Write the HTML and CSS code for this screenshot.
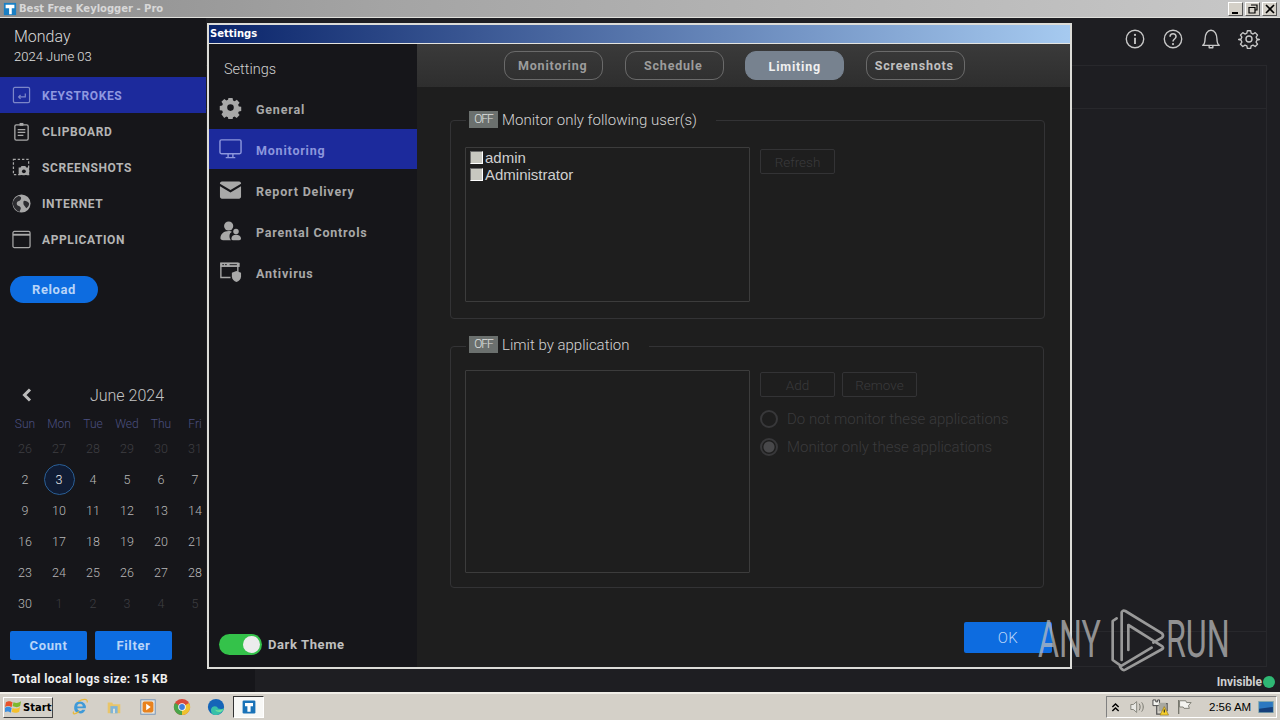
FILE: index.html
```html
<!DOCTYPE html>
<html lang="en">
<head>
<meta charset="utf-8">
<title>Best Free Keylogger - Pro</title>
<link rel="stylesheet" href="styles.css">
</head>
<body>
<div class="screen">
  <header class="appbar">
    <svg class="appicon" viewBox="0 0 16 16"><rect x="1" y="1" width="14" height="14" fill="#1a7fc4"/><path d="M3 3h10v4h-3v7H7V7H3z" fill="#fff"/></svg>
    <span class="apptitle">Best Free Keylogger - Pro</span>
    <div class="wincontrols">
      <button class="winbtn"><svg viewBox="0 0 12 10"><path d="M2 8h6v2H2z" fill="#000"/></svg></button>
      <button class="winbtn"><svg viewBox="0 0 12 10"><path d="M4 1h6v5H8M2 3.500h6V9H2z" fill="none" stroke="#000" stroke-width="1.200"/></svg></button>
      <button class="winbtn"><svg viewBox="0 0 12 10"><path d="M2 1l8 8M10 1l-8 8" fill="none" stroke="#000" stroke-width="1.600"/></svg></button>
    </div>
  </header>

  <div class="app">
    <aside class="side">
      <div class="date"><div class="day">Monday</div><div class="fulldate">2024 June 03</div></div>
      <nav class="nav">
        <a class="navitem active"><svg viewBox="0 0 20 20"><rect x="1.500" y="1.500" width="17" height="16" rx="1.500" fill="none" stroke="#7c86c8" stroke-width="1.300"/><path d="M14 8v3.500H7M9 9.500l-2 2 2 2" fill="none" stroke="#7c86c8" stroke-width="1.300"/></svg><span>KEYSTROKES</span></a>
        <a class="navitem"><svg viewBox="0 0 20 20"><rect x="3" y="3" width="14" height="16" rx="1.500" fill="none" stroke="#a8a8a8" stroke-width="1.400"/><rect x="8" y="1" width="4" height="3" fill="#a8a8a8"/><path d="M6 8h8M6 11h8M6 14h6" stroke="#a8a8a8" stroke-width="1.300"/></svg><span>CLIPBOARD</span></a>
        <a class="navitem"><svg viewBox="0 0 20 20"><rect x="1.500" y="1.500" width="16" height="16" fill="none" stroke="#a8a8a8" stroke-width="1.300" stroke-dasharray="2.500 2"/><path d="M7 10h2l1-1.500h4l1 1.500h3v8H7z" fill="#a8a8a8"/><circle cx="12.500" cy="14" r="2" fill="#16161a"/></svg><span>SCREENSHOTS</span></a>
        <a class="navitem"><svg viewBox="0 0 20 20"><circle cx="10" cy="10" r="9.500" fill="#a8a8a8"/><path d="M7 2c3 1 3 2 2 4s-4 1-4 4 3 2 4 4-1 3-1 5c-3-1-6-4-7-8s3-8 6-9zM13 7c2 0 4 1 5 3 0 2-1 4-3 5-1-2-3-3-3-5s0-3 1-3z" fill="#2c2c30"/></svg><span>INTERNET</span></a>
        <a class="navitem"><svg viewBox="0 0 20 20"><rect x="1" y="1.500" width="18" height="17" rx="1.500" fill="none" stroke="#a8a8a8" stroke-width="1.300"/><path d="M1 5h18" stroke="#a8a8a8" stroke-width="2"/></svg><span>APPLICATION</span></a>
      </nav>
      <button class="reload">Reload</button>
      <section class="calendar">
        <div class="calhead"><svg class="calprev" viewBox="0 0 10 14"><path d="M8 1.500L2.500 7 8 12.500" fill="none" stroke="#bbb" stroke-width="3"/></svg><span class="calmonth">June 2024</span></div>
        <div class="calgrid">
          <span class="wd">Sun</span><span class="wd">Mon</span><span class="wd">Tue</span><span class="wd">Wed</span><span class="wd">Thu</span><span class="wd">Fri</span>
          <span class="d dim">26</span><span class="d dim">27</span><span class="d dim">28</span><span class="d dim">29</span><span class="d dim">30</span><span class="d dim">31</span>
          <span class="d">2</span><span class="d today">3</span><span class="d">4</span><span class="d">5</span><span class="d">6</span><span class="d">7</span>
          <span class="d">9</span><span class="d">10</span><span class="d">11</span><span class="d">12</span><span class="d">13</span><span class="d">14</span>
          <span class="d">16</span><span class="d">17</span><span class="d">18</span><span class="d">19</span><span class="d">20</span><span class="d">21</span>
          <span class="d">23</span><span class="d">24</span><span class="d">25</span><span class="d">26</span><span class="d">27</span><span class="d">28</span>
          <span class="d">30</span><span class="d dim">1</span><span class="d dim">2</span><span class="d dim">3</span><span class="d dim">4</span><span class="d dim">5</span>
        </div>
      </section>
      <div class="sideactions"><button class="blue">Count</button><button class="blue">Filter</button></div>
      <div class="logsize">Total local logs size: 15 KB</div>
    </aside>
    <main class="main">
      <div class="topicons">
        <svg viewBox="0 0 24 24"><circle cx="12" cy="12" r="9.500" fill="none" stroke="#c8c8c8" stroke-width="1.500"/><path d="M12 10.500v7" stroke="#c8c8c8" stroke-width="2"/><circle cx="12" cy="7.500" r="1.200" fill="#c8c8c8"/></svg>
        <svg viewBox="0 0 24 24"><circle cx="12" cy="12" r="9.500" fill="none" stroke="#c8c8c8" stroke-width="1.500"/><path d="M8.800 9.500c0-4.200 6.500-4.200 6.500-.200 0 2.700-3.300 2.700-3.300 5.500" fill="none" stroke="#c8c8c8" stroke-width="1.700"/><circle cx="12" cy="17.500" r="1.200" fill="#c8c8c8"/></svg>
        <svg viewBox="0 0 24 24"><path d="M3 19c2-1.500 2.500-3 2.500-7 0-5 2.500-9.500 6.500-9.500s6.500 4.500 6.500 9.500c0 4 .5 5.500 2.500 7zM10 19v2.500h4V19" fill="none" stroke="#c8c8c8" stroke-width="1.500" stroke-linejoin="round"/></svg>
        <svg viewBox="0 0 24 24"><path d="M10 2h4l.6 3 2.300 1 2.600-1.700 2.800 2.900-1.700 2.500 1 2.300 3 .6v0l-3 .8-1 2.300 1.700 2.600-2.800 2.800-2.600-1.700-2.300 1-.6 3h-4l-.6-3-2.300-1-2.600 1.700-2.800-2.800 1.700-2.600-1-2.300-3-.8 3-.6 1-2.300-1.700-2.500 2.800-2.900 2.600 1.700 2.300-1z" transform="translate(1.200 1.200) scale(.9)" fill="none" stroke="#c8c8c8" stroke-width="1.600" stroke-linejoin="round"/><circle cx="12" cy="12" r="3.300" fill="none" stroke="#c8c8c8" stroke-width="1.500"/></svg>
      </div>
      <div class="logpanel"><div class="logheader"></div><div class="logbody"></div><div class="logfoot"></div></div>
      <div class="status"><span>Invisible</span><i class="dot"></i></div>
    </main>
  </div>

  <footer class="taskbar">
    <button class="start"><svg viewBox="0 0 18 16"><path d="M1 3c3-2 5-1 7 0L7 8C5 7 3 6 0 8z" fill="#e8532c"/><path d="M9 3c3 1 5 1 8-1l-1 5c-3 2-5 1-8 0z" fill="#7db82e"/><path d="M0 9c3-2 5-1 7 0l-1 5c-2-1-4-2-7 0z" fill="#3a8ee0"/><path d="M8 9c3 1 5 1 8-1l-1 5c-3 2-5 1-8 0z" fill="#f5c02c"/></svg><span>Start</span></button>
    <div class="quick">
      <svg viewBox="0 0 20 20"><path d="M10 4a6.500 6.500 0 1 0 6 9h-3.500a3 3 0 0 1-5.500-1.500h9.500A6.500 6.500 0 0 0 10 4zM7 9.500a3 3 0 0 1 6 0z" fill="#3f9ad8"/><path d="M3 15C1 19 5 18 9 15M8 4c5-3 11-4 10 1" fill="none" stroke="#e8b93a" stroke-width="1.300"/></svg>
      <svg viewBox="0 0 20 20"><path d="M3 5h5l1 2h8v10H3z" fill="#e9c56a"/><path d="M6 9h8v8H6z" fill="#7fb4d8"/><path d="M9 12h2v5H9z" fill="#e9e6d8"/></svg>
      <svg viewBox="0 0 20 20"><rect x="2" y="2" width="16" height="16" fill="#e7e4dc" stroke="#6d90b8"/><rect x="4" y="4" width="12" height="12" rx="2" fill="#e8821e"/><path d="M8 6.500l5 3.500-5 3.500z" fill="#fff"/></svg>
      <svg viewBox="0 0 20 20"><circle cx="10" cy="10" r="9" fill="#d94a3a"/><path d="M10 10l7.800-4.500A9 9 0 0 1 10 19z" fill="#eec22f"/><path d="M10 10v9A9 9 0 0 1 2.200 5.500z" fill="#4aa54a"/><circle cx="10" cy="10" r="4.200" fill="#fff"/><circle cx="10" cy="10" r="3.200" fill="#3f7fdc"/></svg>
      <svg viewBox="0 0 20 20"><circle cx="10" cy="10" r="9" fill="#1565b8"/><path d="M19 11c-1 5-7 9-11.500 7.500-3-1-4.500-6-1.500-8.500 2-1.500 6-1 6 1.500 1 1 6.500 1 7-.5z" fill="#38c0a8"/><path d="M9 12.500c0 2 3 3.500 5.500 3 1.500 0 3-1.500 4-3.500-2 2-9.500 2-9.500.5z" fill="#6fe0a0"/></svg>
    </div>
    <button class="task"><svg viewBox="0 0 20 20"><rect x="2" y="2" width="16" height="16" rx="1.500" fill="#1a73b8"/><path d="M5 5h10v4h-3v7H8V9H5z" fill="#fff"/></svg></button>
    <div class="tray">
      <svg class="tr1" viewBox="0 0 10 12"><path d="M1.500 5.500L5 2l3.500 3.500M1.500 10L5 6.500 8.500 10" fill="none" stroke="#000" stroke-width="1.600"/></svg>
      <svg class="tr2" viewBox="0 0 18 16"><path d="M1 5h3l4-3.500v13L4 11H1z" fill="#e8e8e4" stroke="#77776e"/><path d="M11 4c1.500 2 1.500 6 0 8M14 2.500c2.500 3 2.500 8 0 11" fill="none" stroke="#77776e" stroke-width="1.200"/></svg>
      <svg class="tr3" viewBox="0 0 18 18"><path d="M1 1h3v2h2V1h2v6H1z" fill="#f4f4f0" stroke="#444"/><path d="M5 7v9h5M10 5h6v8" fill="none" stroke="#555" stroke-width="1.300"/><rect x="7" y="4" width="8" height="9" fill="#a8a8a0"/><path d="M13 8l4.500 9h-9z" fill="#f6cf2c" stroke="#8a6a10" stroke-width=".6"/><path d="M13 11v3.200" stroke="#222" stroke-width="1.200"/></svg>
      <svg class="tr4" viewBox="0 0 18 18"><path d="M3 1v16" stroke="#77776e" stroke-width="1.500"/><path d="M4 2h7l1 2h5l-3 3.500 1 3H9L8 9H4z" fill="#f4f4f0" stroke="#77776e"/></svg>
      <span class="clock">2:56 AM</span>
      <svg class="tr5" viewBox="0 0 18 14"><rect x=".5" y=".5" width="17" height="13" fill="#2c78c0" stroke="#8aa"/><path d="M1 9l16-2v6H1z" fill="#153f7a"/></svg>
    </div>
  </footer>

  <div class="dialog">
    <div class="dlgtitle">Settings</div>
    <div class="dlgbody">
      <aside class="dlgside">
        <div class="dlghead">Settings</div>
        <nav class="dlgnav">
          <a class="dlgitem"><svg viewBox="0 0 24 24"><path fill-rule="evenodd" d="M9.500 1h5l.6 3 2 .9L19.700 3l3.300 3.500-1.800 2.600.9 2 2.900.5v5l-2.900.6-.9 2 1.800 2.400-3.500 3.400-2.500-1.700-2 .9-.5 2.900h-5l-.6-2.900-2-.9-2.500 1.700L1 20.600l1.800-2.500-.9-2L-1 15.600v-5l2.900-.6.900-2L1 5.500 4.500 2.100 7 3.800l2-.9zM12 8.500a4 4 0 1 0 0 8 4 4 0 0 0 0-8z" transform="translate(1.200 .3) scale(.9)" fill="#a8a8a8"/></svg><span>General</span></a>
          <a class="dlgitem active"><svg viewBox="0 0 24 22"><rect x="1" y="1.500" width="22" height="14.500" rx="1.500" fill="none" stroke="#8c96dc" stroke-width="1.500"/><path d="M9.500 16v3.500M14.500 16v3.500M7 20h10" stroke="#8c96dc" stroke-width="1.500"/></svg><span>Monitoring</span></a>
          <a class="dlgitem"><svg viewBox="0 0 24 20"><path d="M3 1h18c1 0 2 1 2 2v.5l-11 6.500L1 3.500V3c0-1 1-2 2-2z" fill="#a8a8a8"/><path d="M1 6l11 6.500L23 6v11c0 1-1 2-2 2H3c-1 0-2-1-2-2z" fill="#a8a8a8"/></svg><span>Report Delivery</span></a>
          <a class="dlgitem"><svg viewBox="0 0 24 24"><circle cx="10" cy="6.500" r="5" fill="#a8a8a8"/><path d="M1 20c0-5 4-8 9-8 2 0 3 .5 3.500 1-3 1-3.500 6-1 9H4c-2 0-3-1-3-2z" fill="#a8a8a8"/><circle cx="18" cy="12.500" r="3" fill="#a8a8a8"/><path d="M13 20.500c0-3 2-4.500 5-4.500s5.500 1.500 5.500 4.500c0 1-1 1.500-2 1.500h-7c-1 0-1.500-.5-1.500-1.500z" fill="#a8a8a8"/></svg><span>Parental Controls</span></a>
          <a class="dlgitem"><svg viewBox="0 0 24 24"><path d="M20 16V2.500H1.500V18H12" fill="none" stroke="#a8a8a8" stroke-width="1.500"/><rect x="1" y="2" width="21" height="4.500" fill="#a8a8a8"/><path d="M3 4h2M6 4h2M11 4h8" stroke="#16161a" stroke-width="1"/><path d="M18.500 11l5 1.800v4c0 3-2.500 5.200-5 6-2.500-.8-5-3-5-6v-4z" fill="#a8a8a8"/></svg><span>Antivirus</span></a>
        </nav>
        <div class="theme"><span class="switch"><i></i></span><span>Dark Theme</span></div>
      </aside>
      <section class="dlgmain">
        <div class="tabs"><button class="tab dim">Monitoring</button><button class="tab dim">Schedule</button><button class="tab on">Limiting</button><button class="tab">Screenshots</button></div>
        <div class="pane">
          <fieldset class="group g1">
            <legend><span class="badge">OFF</span><span class="legtext">Monitor only following user(s)</span></legend>
            <div class="grouprow">
              <div class="listbox users">
                <label class="user"><i class="chk"></i>admin</label>
                <label class="user"><i class="chk"></i>Administrator</label>
              </div>
              <div class="ctrls"><div class="btnrow"><button class="ghost">Refresh</button></div></div>
            </div>
          </fieldset>
          <fieldset class="group g2">
            <legend><span class="badge">OFF</span><span class="legtext">Limit by application</span></legend>
            <div class="grouprow">
              <div class="listbox apps"></div>
              <div class="ctrls">
                <div class="btnrow"><button class="ghost">Add</button><button class="ghost">Remove</button></div>
                <div class="radio r1"><i class="rb"></i><span>Do not monitor these applications</span></div>
                <div class="radio"><i class="rb sel"></i><span>Monitor only these applications</span></div>
              </div>
            </div>
          </fieldset>
          <div class="okrow"><button class="ok">OK</button></div>
        </div>
      </section>
    </div>
  </div>

  <div class="watermark">
    <span class="wmtext">ANY</span>
    <svg viewBox="0 0 240 210"><path d="M50 40L38 48V165L62 182" fill="none" stroke="#999" stroke-width="8" stroke-linejoin="round" stroke-linecap="round"/><path d="M65 165V22Q68 14 76 18L186 85Q192 92 186 98L160 113" fill="none" stroke="#999" stroke-width="8" stroke-linejoin="round" stroke-linecap="round"/><path d="M85 135V60L187 124Q191 128 187 132L76 194Q70 197 65 192L60 185L155 128" fill="none" stroke="#999" stroke-width="8" stroke-linejoin="round" stroke-linecap="round"/></svg>
    <span class="wmtext run">RUN</span>
  </div>
</div>
</body>
</html>
```
FILE: styles.css
```css
* { box-sizing: border-box; }
html, body { margin: 0; padding: 0; height: 100%; background: #1e1e22; overflow: hidden; }
button { font: inherit; padding: 0; }
.screen { position: relative; width: 1280px; height: 720px; display: flex; flex-direction: column; font-family: Roboto, "Liberation Sans", sans-serif; color: #c8c8c8; overflow: hidden; }

/* App title bar */
.appbar { height: 18px; flex: none; display: flex; align-items: center; padding: 0 3px 0 3px; background: linear-gradient(90deg, #8f8f8f 0%, #a4a4a4 30%, #c8c8c8 100%); border-bottom: 1px solid #e0e0dc; }
.appicon { width: 14px; height: 14px; flex: none; }
.apptitle { margin-left: 2px; font: bold 10px "DejaVu Sans", sans-serif; color: #d8d8d8; }
.wincontrols { margin-left: auto; display: flex; gap: 2px; }
.winbtn { width: 15px; height: 14px; background: #d4d0c8; border: 1px solid; border-color: #fff #555 #555 #fff; display: flex; align-items: center; justify-content: center; }
.winbtn svg { width: 12px; height: 10px; }

.app { flex: none; height: 674px; display: flex; min-height: 0; }

/* Left sidebar */
.side { width: 206px; flex: none; background: #16161a; display: flex; flex-direction: column; }
.date { flex: none; padding: 9px 0 0 14px; height: 59px; }
.day { font-size: 16px; font-weight: 300; line-height: 20px; color: #d8d8d8; }
.fulldate { font-size: 13px; font-weight: 300; line-height: 16px; margin-top: 2px; color: #e0e0e0; }
.nav { display: flex; flex-direction: column; flex: none; }
.navitem { height: 36px; flex: none; display: flex; align-items: center; padding-left: 12px; gap: 11px; font-size: 12px; font-weight: 700; letter-spacing: .6px; color: #b4b4b4; }
.navitem span { padding-top: 1px; }
.navitem svg { width: 19px; height: 19px; flex: none; }
.navitem.active { background: #1c2a9c; color: #8f98e0; }
.reload { flex: none; width: 88px; height: 27px; margin: 19px 0 0 10px; border: 0; border-radius: 14px; background: #0d6ce0; color: #b8d4f8; font-size: 13px; font-weight: 700; letter-spacing: .6px; }
.calendar { flex: none; margin-top: 81px; }
.calhead { position: relative; height: 22px; display: flex; justify-content: center; align-items: center; padding-left: 48px; }
.calprev { position: absolute; left: 22px; top: 4px; width: 10px; height: 14px; }
.calmonth { font-size: 16px; font-weight: 300; color: #c4c4c4; }
.calgrid { margin: 11px 0 0 8px; display: grid; grid-template-columns: repeat(6, 34px); grid-template-rows: 15.500px repeat(6, 31px); }
.wd { line-height: 14px; font-size: 12px; font-weight: 300; text-align: center; color: #4b5080; }
.d { display: flex; align-items: center; justify-content: center; font-size: 12.500px; font-weight: 300; color: #b8b8b8; }
.d.dim { color: #3e3e42; }
.d.today { justify-self: center; width: 31px; height: 31px; border-radius: 50%; border: 1px solid #2a5f96; background: #101c34; color: #f0f0f0; }
.sideactions { flex: none; display: flex; gap: 8px; margin: 12.500px 0 0 10px; }
.blue { width: 77px; height: 29px; border: 0; border-radius: 2px; background: #0d6ce0; color: #b8d4f8; font-size: 13px; font-weight: 700; letter-spacing: .6px; }
.logsize { position: relative; flex: none; width: 255px; height: 32px; padding: 12px 0 0 12px; background: #16161a; font-size: 12px; line-height: 15px; font-weight: 700; letter-spacing: .4px; color: #f0f0f0; white-space: nowrap; }

/* Main */
.main { flex: 1; background: #1e1e22; display: flex; flex-direction: column; min-width: 0; }
.topicons { height: 47px; display: flex; justify-content: flex-end; align-items: flex-start; gap: 16px; padding: 10px 20px 0 0; flex: none; }
.topicons svg { width: 22px; height: 22px; flex: none; }
.logpanel { margin: 0 13px 0 0; border: 1px solid #28282c; border-left: 0; display: flex; flex-direction: column; height: 602px; flex: none; }
.logheader { height: 43px; border-bottom: 1px solid #28282c; }
.logbody { flex: 1; }
.logfoot { height: 35px; border-top: 1px solid #28282c; }
.status { display: flex; align-items: center; justify-content: flex-end; padding-right: 5px; margin-top: 8px; font-size: 12px; font-weight: 700; color: #d0d0d0; }
.dot { width: 12px; height: 12px; border-radius: 50%; background: #2fb874; margin-left: 1px; }

/* Taskbar */
.taskbar { height: 28px; flex: none; background: #d4d0c8; border-top: 2px solid #f0eee8; display: flex; align-items: center; }
.start { width: 50px; height: 21px; margin-left: 3px; display: flex; align-items: center; gap: 1px; background: #d4d0c8; border: 1px solid; border-color: #fff #444 #444 #fff; font: bold 10px "DejaVu Sans", sans-serif; color: #000; padding-left: 1px; }
.start svg { width: 17px; height: 16px; flex: none; }
.quick { display: flex; margin-left: 18px; gap: 16px; }
.quick svg { width: 18px; height: 18px; flex: none; }
.task { width: 31px; height: 22px; margin-left: 8px; background: #f8f8f6; border: 1px solid; border-color: #333 #fff #fff #333; display: flex; align-items: center; justify-content: center; }
.task svg { width: 16px; height: 16px; }
.tray { margin-left: auto; margin-right: 3px; width: 171px; height: 22px; display: flex; align-items: center; border: 1px solid; border-color: #808080 #fff #fff #808080; padding-left: 4px; }
.tray svg { flex: none; }
.tr1 { width: 9px; height: 11px; }
.tr2 { width: 15px; height: 14px; margin-left: 10px; }
.tr3 { width: 17px; height: 17px; margin-left: 7px; }
.tr4 { width: 16px; height: 16px; margin-left: 7px; }
.clock { margin-left: 17px; font: 11.500px "Liberation Sans", sans-serif; color: #000; white-space: nowrap; }
.tr5 { width: 16px; height: 12px; margin-left: 7px; }

/* Settings dialog */
.dialog { position: absolute; left: 207px; top: 23px; width: 865px; height: 646px; background: #16161a; border: 2px solid #dcdcd8; display: flex; flex-direction: column; }
.dlgtitle { height: 19px; flex: none; background: linear-gradient(90deg, #0a246a, #a6caf0); border-bottom: 1px solid #e4e4e0; color: #fff; font: bold 10px "DejaVu Sans", sans-serif; line-height: 17px; padding-left: 1px; }
.dlgbody { flex: 1; display: flex; min-height: 0; }
.dlgside { width: 208px; flex: none; background: #16161a; display: flex; flex-direction: column; }
.dlghead { padding: 17px 0 0 15px; height: 44px; font-size: 14.500px; font-weight: 300; line-height: 18px; color: #d0d0d0; }
.dlgnav { display: flex; flex-direction: column; gap: 1px; }
.dlgitem { height: 40px; display: flex; align-items: center; gap: 14px; padding-left: 10px; font-size: 12.500px; font-weight: 700; letter-spacing: .8px; color: #a8a8a8; }
.dlgitem span { padding-top: 2px; }
.dlgitem svg { width: 23px; height: 22px; flex: none; }
.dlgitem.active { background: #1c2a9c; color: #8c96dc; }
.theme { margin-top: auto; margin-bottom: 12px; padding-left: 10px; display: flex; align-items: center; gap: 6px; font-size: 13px; font-weight: 700; letter-spacing: .6px; color: #c0c0c0; }
.switch { width: 43px; height: 21px; border-radius: 11px; background: #34c24a; position: relative; display: block; }
.switch i { position: absolute; right: 2px; top: 2px; width: 17px; height: 17px; border-radius: 50%; background: #ececec; }
.dlgmain { flex: 1; background: #1e1e1e; display: flex; flex-direction: column; min-width: 0; }
.tabs { height: 43px; flex: none; background: linear-gradient(180deg, #3a3a3a, #2e2e2e); display: flex; justify-content: center; gap: 21.500px; align-items: center; padding-right: 18px; }
.tab { width: 99px; height: 29px; border: 1px solid #6a6a6a; border-radius: 11px; background: transparent; color: #c0c0c0; font-size: 12.500px; font-weight: 700; letter-spacing: .8px; padding-right: 2px; }
.tab.dim { color: #9c9c9c; }
.tab.on { background: #77828f; border-color: #77828f; color: #f0f0f0; padding: 2px 0 0; }
.pane { flex: 1; padding: 0 0 0 33px; display: flex; flex-direction: column; }
.group { flex: none; margin: 0; padding: 0 14px 0 14px; border: 1px solid #333335; border-radius: 4px; width: 595px; min-width: 0; }
.group legend { display: flex; align-items: flex-start; gap: 4px; margin-left: 1px; padding: 0 19px 0 3px; font-size: 15px; font-weight: 300; color: #d4d4d4; }
.legtext { line-height: 19px; }
.g1 { margin-top: 24px; height: 208px; }
.g1 legend { height: 19px; }
.g2 { margin-top: 17px; height: 252px; width: 594px; }
.g2 legend { height: 21px; }
.badge { width: 29px; height: 17px; background: #6b706e; color: #e0e0e0; font-size: 12px; line-height: 17px; letter-spacing: -1px; text-align: center; font-weight: 300; flex: none; }
.grouprow { display: flex; gap: 10px; }
.g1 .grouprow { margin-top: 17px; }
.g2 .grouprow { margin-top: 13px; }
.listbox { width: 285px; flex: none; border: 1px solid #3c3c3c; border-radius: 1px; }
.users { height: 155px; padding: 1px 0 0 4px; }
.apps { height: 203px; }
.user { display: flex; align-items: center; height: 17px; font: 15px "Liberation Sans", sans-serif; color: #d0d0d0; }
.chk { width: 13px; height: 13px; background: #c8c8c0; border: 1px solid; border-color: #6a6a6a #fff #fff #6a6a6a; margin-right: 2px; flex: none; }
.ctrls { padding-top: 2px; }
.btnrow { display: flex; gap: 7px; }
.ghost { width: 75px; height: 25px; background: transparent; border: 1px solid #333335; border-radius: 2px; color: #3a3a3c; font-size: 13.500px; font-weight: 300; }
.radio { display: flex; align-items: center; gap: 9px; height: 28px; font-size: 15px; font-weight: 300; color: #3a3a3c; }
.r1 { margin-top: 8px; }
.rb { width: 18px; height: 18px; border-radius: 50%; border: 2px solid #38383a; flex: none; display: block; }
.rb.sel { background: radial-gradient(circle, #48484a 0 5px, transparent 6px); }
.okrow { margin-top: 34px; padding-left: 514px; }
.ok { width: 88px; height: 31px; border: 0; border-radius: 2px; background: #0d6ce0; color: #b8d4f8; font-size: 15px; font-weight: 300; letter-spacing: .5px; }

/* Watermark */
.watermark { position: absolute; left: 1038px; top: 605px; width: 194px; height: 70px; display: flex; align-items: center; color: rgba(190,190,190,.72); pointer-events: none; }
.watermark svg { width: 80px; height: 70px; flex: none; }
.wmtext { font: 400 52px Roboto, sans-serif; display: inline-block; flex: none; transform-origin: left center; transform: scaleX(.62); line-height: 70px; width: 62px; white-space: nowrap; }
.wmtext.run { margin-left: -14px; }
```
